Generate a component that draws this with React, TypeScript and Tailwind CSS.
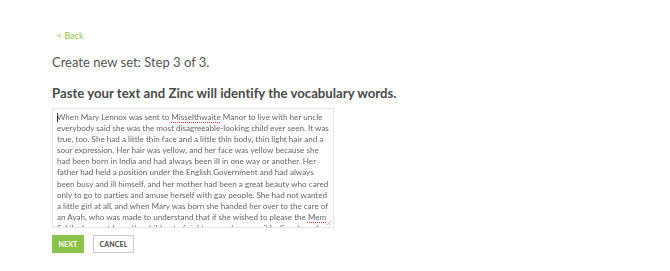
const lines: React.ReactNode[] = [
  <>When Mary Lennox was sent to <span className="underline decoration-dotted decoration-red-500 underline-offset-2">Misselthwaite</span> Manor to live with her uncle</>,
  "everybody said she was the most disagreeable-looking child ever seen. It was",
  "true, too. She had a little thin face and a little thin body, thin light hair and a",
  "sour expression. Her hair was yellow, and her face was yellow because she",
  "had been born in India and had always been ill in one way or another. Her",
  "father had held a position under the English Government and had always",
  "been busy and ill himself, and her mother had been a great beauty who cared",
  "only to go to parties and amuse herself with gay people. She had not wanted",
  "a little girl at all, and when Mary was born she handed her over to the care of",
  <>an Ayah, who was made to understand that if she wished to please the <span className="underline decoration-dotted decoration-red-500 underline-offset-2">Mem</span></>,
  "Sahib she must keep the child out of sight as much as possible. So when she",
];

export default function App() {
  return (
    <div
      className="w-[670px] h-[271px] bg-white pl-[52px] pt-[29px] antialiased [font-variant-ligatures:none]"
      style={{ fontFamily: "Lato, 'Open Sans', sans-serif" }}
    >
      <a href="#" className="block ml-[5px] text-[9px] leading-[14px] text-[#8bc34a]">
        &lt; Back
      </a>
      <h1 className="mt-[11px] text-[13px] leading-[17px] text-[#555]">
        Create new set: Step 3 of 3.
      </h1>
      <h2 className="mt-[14px] text-[13.2px] leading-[17px] font-bold text-[#4a4a4a]">
        Paste your text and Zinc will identify the vocabulary words.
      </h2>
      <div className="relative mt-[6px] w-[282px] h-[120px] border border-[#e6e6e6] overflow-hidden pl-[4px] pt-[3px]">
        <div className="text-[8.1px] leading-[11.1px] text-[#666] will-change-transform">
          {lines.map((l, i) => (
            <div key={i} className="whitespace-nowrap">
              {i === 0 && <span className="inline-block w-px h-[9px] bg-[#333] align-middle -mr-px" />}
              {l}
            </div>
          ))}
        </div>
        <svg className="absolute right-[1px] bottom-[1px]" width="6" height="6" viewBox="0 0 6 6">
          <path d="M5 1L1 5M5 3.5L3.5 5" stroke="#aaa" strokeWidth="0.8" />
        </svg>
      </div>
      <div className="mt-[7px] flex gap-[9px]">
        <button className="w-[32px] h-[18px] bg-[#8bc34a] text-white text-[7px] font-bold tracking-wide">
          NEXT
        </button>
        <button className="w-[41px] h-[18px] bg-white border border-[#ccc] text-[#444] text-[7px] font-bold tracking-wide">
          CANCEL
        </button>
      </div>
    </div>
  );
}
